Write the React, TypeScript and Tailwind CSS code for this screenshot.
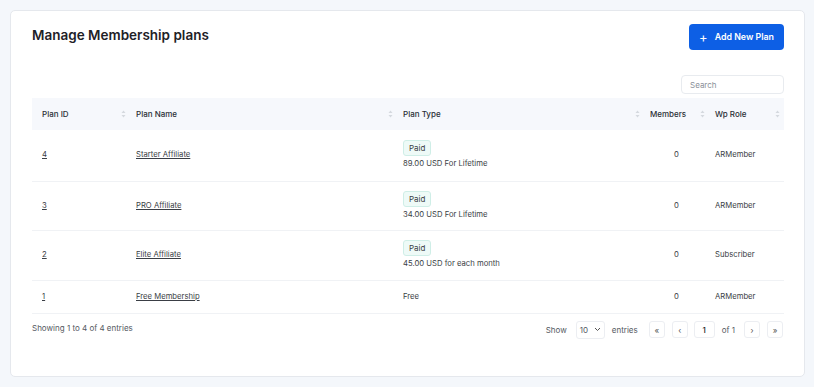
import React from "react"

type Plan = {
  id: number
  name: string
  paid: boolean
  price: string
  members: number
  role: string
  h: string
}

const PLANS: Plan[] = [
  { id: 4, name: "Starter Affiliate", paid: true, price: "89.00 USD For Lifetime", members: 0, role: "ARMember", h: "h-[51px]" },
  { id: 3, name: "PRO Affiliate", paid: true, price: "34.00 USD For Lifetime", members: 0, role: "ARMember", h: "h-[49px]" },
  { id: 2, name: "Elite Affiliate", paid: true, price: "45.00 USD for each month", members: 0, role: "Subscriber", h: "h-[50px]" },
  { id: 1, name: "Free Membership", paid: false, price: "Free", members: 0, role: "ARMember", h: "h-[33px]" },
]

function SortIcon() {
  return (
    <svg width="5" height="8" viewBox="0 0 5 8" className="shrink-0">
      <path d="M2.5 0.5 L4.5 3 L0.5 3 Z" fill="#d5d9df" />
      <path d="M2.5 7.5 L4.5 5 L0.5 5 Z" fill="#d5d9df" />
    </svg>
  )
}

function Th({ label, className, first }: { label: string; className: string; first?: boolean }) {
  return (
    <th className={`${className} font-medium text-left p-0`}>
      <div className={`flex items-center justify-between pr-[4px] ${first ? "pl-[10px]" : "pl-[6px]"}`}>
        <span>{label}</span>
        <SortIcon />
      </div>
    </th>
  )
}

function PageBtn({ children }: { children: React.ReactNode }) {
  return (
    <button className="w-[16px] h-[17px] flex items-center justify-center rounded-[3px] border border-[#eceef2] text-[8px] text-[#555]">
      {children}
    </button>
  )
}

export default function App() {
  return (
    <div
      className="w-[814px] h-[387px] bg-[#f4f7fb] pt-[10px] pl-[10px] pr-[9px]"
      style={{ fontFamily: "Inter, 'Noto Sans', sans-serif" }}
    >
      <div className="h-[367px] bg-white rounded-[5px] border border-[#e5e8ed] px-[21px]">
        <div className="flex justify-between items-start pt-[13px]">
          <h1 className="text-[13.5px] font-semibold text-[#1e2127] mt-[1px]">
            Manage Membership plans
          </h1>
          <button className="w-[95px] h-[26px] mr-[-1px] bg-[#0d5fe5] rounded-[4px] text-white text-[8.8px] font-semibold flex items-center justify-center gap-[7px]">
            <span className="text-[13px] font-normal leading-none">+</span>
            Add New Plan
          </button>
        </div>

        <div className="flex justify-end mt-[25px]">
          <div className="w-[103px] h-[19px] mr-[-1px] border border-[#e8ebef] rounded-[4px] flex items-center pl-[8px] text-[8px] text-[#8a8f98]">
            Search
          </div>
        </div>

        <table className="w-[752px] mt-[4px] border-collapse table-fixed">
          <thead>
            <tr className="h-[32px] bg-[#f6f8fc] text-[8px] text-[#2b2f36]">
              <Th label="Plan ID" className="w-[98px]" first />
              <Th label="Plan Name" className="w-[267px]" />
              <Th label="Plan Type" className="w-[247px]" />
              <Th label="Members" className="w-[65px]" />
              <Th label="Wp Role" className="w-[75px]" />
            </tr>
          </thead>
          <tbody className="text-[7.7px] text-[#3a3e45]">
            {PLANS.map((p) => (
              <tr key={p.id} className={`${p.h} border-b border-[#f0f2f5]`}>
                <td className="pl-[10px]">
                  <span className="underline">{p.id}</span>
                </td>
                <td className="pl-[6px]">
                  <span className="underline">{p.name}</span>
                </td>
                <td className="pl-[6px]">
                  {p.paid ? (
                    <div className="flex flex-col items-start">
                      <span className="px-[5px] h-[16px] flex items-center rounded-[3px] bg-[#eefaf7] border border-[#cfeee7] text-[8px]">
                        Paid
                      </span>
                      <span className="mt-[2px]">{p.price}</span>
                    </div>
                  ) : (
                    <span>{p.price}</span>
                  )}
                </td>
                <td className="text-center">{p.members}</td>
                <td className="pl-[6px]">{p.role}</td>
              </tr>
            ))}
          </tbody>
        </table>

        <div className="flex items-center justify-between mt-[6px] text-[8px] text-[#555a62]">
          <span className="-mt-[3px]">Showing 1 to 4 of 4 entries</span>
          <div className="flex items-center mt-[1px]">
            <span>Show</span>
            <div className="ml-[9px] w-[29px] h-[18px] border border-[#eceef2] rounded-[3px] flex items-center justify-between px-[3px] text-[8px]">
              <span>10</span>
              <svg width="7" height="5" viewBox="0 0 7 5">
                <path d="M1 1 L3.5 3.5 L6 1" stroke="#555" strokeWidth="1" fill="none" />
              </svg>
            </div>
            <span className="ml-[7px]">entries</span>
            <div className="ml-[11px] flex items-center gap-[7px]">
              <PageBtn>«</PageBtn>
              <PageBtn>‹</PageBtn>
            </div>
            <div className="ml-[6px] w-[21px] h-[17px] border border-[#eceef2] rounded-[3px] flex items-center justify-center text-[8px] text-[#222] font-medium">
              1
            </div>
            <span className="ml-[7px] mr-[9px]">of 1</span>
            <div className="flex items-center gap-[7px]">
              <PageBtn>›</PageBtn>
              <PageBtn>»</PageBtn>
            </div>
          </div>
        </div>
      </div>
    </div>
  )
}
